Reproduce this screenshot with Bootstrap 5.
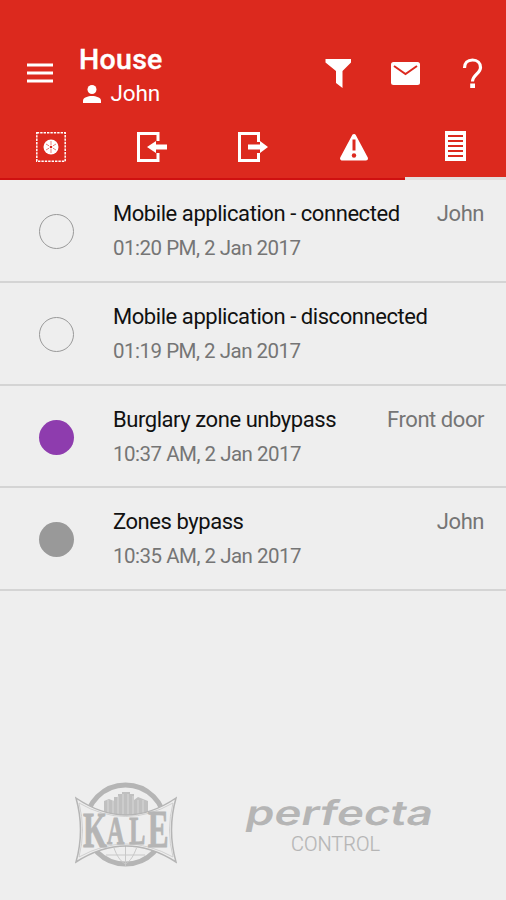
<!DOCTYPE html>
<html lang="en">
<head>
<meta charset="utf-8">
<meta name="viewport" content="width=device-width, initial-scale=1">
<title>House</title>
<link href="https://cdn.jsdelivr.net/npm/bootstrap@5.3.0/dist/css/bootstrap.min.css" rel="stylesheet">
<style>
body{font-family:Roboto,"Liberation Sans",sans-serif;background:#eee;height:900px;overflow:hidden}
svg{display:block;flex:none}
.app-header{background:#dc291e;height:180px;color:#fff}
.top-row{height:115px;padding:43px 20px 0 27px}
.menu-btn{margin:20px 26px 0 0}
.house-name{font-size:28.500px;font-weight:500;line-height:34px;letter-spacing:.3px;-webkit-text-stroke:.4px #fff}
.user-name{font-size:22.500px;line-height:33px;letter-spacing:-.1px}
.user-icon{margin:0 9.500px 0 4px}
.tab-row{height:65px}
.tab-item{border-bottom:2px solid #cf1010;color:#fff}
.tab-item.active{border-bottom:3px solid #e2dddd}
.event{height:102.75px;border-bottom:2px solid #d4d4d4;padding:17px 22px 0 39px}
.dot{width:35px;height:35px;border-radius:50%;margin:17px 39px 0 0;flex:none}
.dot-empty{border:1.5px solid #999}
.dot-purple{background:#8e3cae}
.dot-gray{background:#999}
.event-name{font-size:22px;line-height:34px;color:#111;letter-spacing:-.44px;white-space:nowrap}
.event-date{font-size:20.500px;line-height:34px;color:#757575;letter-spacing:-.5px}
.event-src{font-size:22px;line-height:34px;color:#757575;letter-spacing:-.45px}
.brands{padding:0 70px 22px 75px}
.kale-logo{margin-bottom:10px}
.perfecta-logo{overflow:visible}
</style>
<script src="https://cdn.jsdelivr.net/npm/bootstrap@5.3.0/dist/js/bootstrap.bundle.min.js"></script>
</head>
<body class="d-flex flex-column">
<header class="app-header flex-shrink-0">
  <div class="top-row d-flex align-items-start">
    <svg class="menu-btn" width="26" height="20" fill="#fff"><path d="M0 .5h26v3H0zM0 8.500h26v3H0zM0 16.500h26v3H0z"/></svg>
    <div class="flex-grow-1">
      <div class="house-name">House</div>
      <div class="user-name d-flex align-items-center">
        <svg class="user-icon" width="18" height="18" fill="#fff"><circle cx="9" cy="4.500" r="4.500"/><path d="M0 18v-2.500c0-3 5-4.500 9-4.500s9 1.500 9 4.500V18z"/></svg>
        <span>John</span>
      </div>
    </div>
    <svg width="161" height="60" viewBox="-1 0 161 60" fill="#fff">
      <path d="M-.5 16h25.500v3.500L16.500 28v17l-6.500-5V28L-.5 19.500z"/>
      <rect x="65" y="19" width="29" height="23" rx="2.500"/>
      <path d="M68 23l11.500 8 11.500-8" fill="none" stroke="#dc291e" stroke-width="2"/>
      <path d="M138.500 25c0-5 3-8 8-8s8 3 8 7.500c0 6-8 7.500-8 14" fill="none" stroke="#fff" stroke-width="3.200"/>
      <rect x="144.200" y="40.500" width="4.800" height="4.500"/>
    </svg>
  </div>
  <nav class="tab-row d-flex">
    <div class="tab-item col d-flex align-items-center justify-content-center"><svg width="30" height="30"><rect x=".8" y=".8" width="28.400" height="28.400" fill="none" stroke="#fff" stroke-width="1.500" stroke-dasharray="2.400 1"/><circle cx="15" cy="15" r="7.500" fill="#fff"/><path d="M15 9v4M15 17v4M10 12l3 1.800M17 16.200l3 1.800M10 18l3-1.800M17 13.800l3-1.800" stroke="#dc291e" stroke-width=".6"/><circle cx="15" cy="15" r="1.300" fill="#dc291e"/></svg></div>
    <div class="tab-item col d-flex align-items-center justify-content-center"><svg width="30" height="30" fill="#fff"><path d="M21 9V1.500H1.500v27H21V21" fill="none" stroke="#fff" stroke-width="3"/><path d="M10 15l9-6v3.500h11v5H19V21z"/></svg></div>
    <div class="tab-item col d-flex align-items-center justify-content-center"><svg width="30" height="30" fill="#fff"><path d="M20.500 10V1.500H1.500v27h19V21" fill="none" stroke="#fff" stroke-width="3"/><path d="M30 15l-8-6v3.500H10v5h12V21z"/></svg></div>
    <div class="tab-item col d-flex align-items-center justify-content-center"><svg width="30" height="30"><path d="M15 4L3 26.500h24z" fill="#fff" stroke="#fff" stroke-width="4" stroke-linejoin="round"/><path d="M15 7.500v11" stroke="#dc291e" stroke-width="3"/><circle cx="15" cy="23.500" r="2.200" fill="#dc291e"/></svg></div>
    <div class="tab-item active col d-flex align-items-center justify-content-center"><svg width="21" height="30"><path d="M0 0h21v30H0z" fill="#fff"/><path d="M3 5h15M3 10h15M3 15h15M3 20h15M3 25h15" stroke="#dc291e" stroke-width="1.900"/></svg></div>
  </nav>
</header>
<main class="flex-grow-1">
  <div class="event d-flex align-items-start"><span class="dot dot-empty"></span><div class="flex-grow-1"><div class="event-name">Mobile application - connected</div><div class="event-date">01:20 PM, 2 Jan 2017</div></div><div class="event-src">John</div></div>
  <div class="event d-flex align-items-start"><span class="dot dot-empty"></span><div class="flex-grow-1"><div class="event-name">Mobile application - disconnected</div><div class="event-date">01:19 PM, 2 Jan 2017</div></div></div>
  <div class="event d-flex align-items-start"><span class="dot dot-purple"></span><div class="flex-grow-1"><div class="event-name">Burglary zone unbypass</div><div class="event-date">10:37 AM, 2 Jan 2017</div></div><div class="event-src">Front door</div></div>
  <div class="event d-flex align-items-start"><span class="dot dot-gray"></span><div class="flex-grow-1"><div class="event-name">Zones bypass</div><div class="event-date">10:35 AM, 2 Jan 2017</div></div><div class="event-src">John</div></div>
</main>
<footer class="brands d-flex justify-content-between align-items-end">
  <svg class="kale-logo" width="102" height="88" viewBox="75 780 102 88" fill="#b5b5b5">
    <circle cx="125.500" cy="824.500" r="39.500" fill="none" stroke="#b5b5b5" stroke-width="5"/>
    <path d="M104 814V801l5-2 5 2v-4h4v-3h4v-2h8v2h4v6l4-3 5 2 5 2v13l-14 5h-16z" fill="#c0c0c0"/>
    <path d="M108 800v14M113 800v15M118 796v19M123 794v22M128 794v22M133 796v19M138 800v15M143 800v14" stroke="#dedede" stroke-width=".8"/>
    <path d="M106 855h39M114 848c3 8 6 13 11.500 16 5-3 8-8 11-16M125.500 846v20" fill="none" stroke="#c8c8c8"/>
    <path d="M76 798q50 34 100 0q-9 32 0 64q-50-32-100 0q9-32 0-64z" fill="#eee" stroke="#b5b5b5" stroke-width="1.500"/>
    <path d="M79 803q46.500 27 94 0q-7 27 0 54q-47-26-94 0q7-27 0-54z" fill="none" stroke="#c8c8c8" stroke-width=".8"/>
    <text transform="translate(83 0) scale(.6 1)" font-family="Liberation Serif,serif" font-weight="700" stroke="#b5b5b5" stroke-width="1"><tspan x="0" y="847.500" font-size="51">K</tspan><tspan x="40" y="844" font-size="40">A</tspan><tspan x="77" y="844" font-size="40">L</tspan><tspan x="108" y="847.500" font-size="52">E</tspan></text>
  </svg>
  <svg class="perfecta-logo" width="200" height="80" viewBox="236 798 200 80" fill="#b5b5b5">
    <text transform="translate(244 825) skewX(-12)" x="0" y="0" font-family="Inter,sans-serif" font-weight="600" font-size="34" textLength="187" lengthAdjust="spacingAndGlyphs">perfecta</text>
    <text x="291" y="851" font-family="Roboto,sans-serif" font-weight="300" font-size="21" stroke="#b5b5b5" stroke-width=".2" textLength="89" lengthAdjust="spacingAndGlyphs">CONTROL</text>
  </svg>
</footer>
</body>
</html>
